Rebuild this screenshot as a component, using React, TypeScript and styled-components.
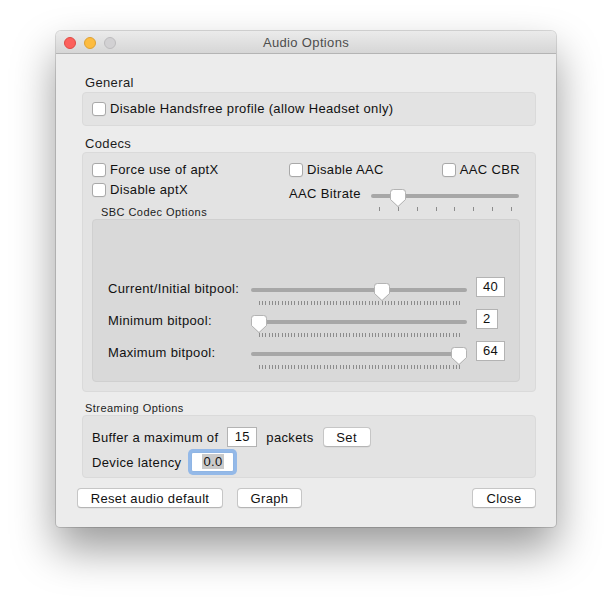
import React from 'react';
import styled, { createGlobalStyle } from 'styled-components';

const GlobalStyle = createGlobalStyle`
  html, body {
    margin: 0;
    background: #ffffff;
  }
  body {
    font-family: "Liberation Sans", Arial, sans-serif;
    font-size: 13px;
    letter-spacing: 0.35px;
    color: #111;
  }
`;

// Page and window frame
const Page = styled.div`
  height: 608px;
  box-sizing: border-box;
  padding: 31px 0 0 56px;
`;

const Window = styled.div`
  width: 500px;
  height: 496px;
  display: flex;
  flex-direction: column;
  background: #ececec;
  border-radius: 5px 5px 4px 4px;
  overflow: hidden;
  box-shadow: 0 0 0 1px rgba(0, 0, 0, 0.14), 0 22px 44px rgba(0, 0, 0, 0.4);
`;

const TitleBar = styled.div`
  height: 23px;
  box-sizing: border-box;
  padding: 1px 8px 0;
  display: grid;
  grid-template-columns: 1fr auto 1fr;
  align-items: center;
  background: linear-gradient(#ebebeb, #d6d6d6);
  border-bottom: 1px solid #b4b4b4;
`;

const Lights = styled.div`
  display: flex;
  gap: 8px;
`;

const Light = styled.span<{ $fill: string; $edge: string }>`
  width: 12px;
  height: 12px;
  border-radius: 50%;
  box-sizing: border-box;
  background: ${(p) => p.$fill};
  border: 1px solid ${(p) => p.$edge};
`;

const Title = styled.div`
  font-size: 13px;
  color: #4d4d4d;
  line-height: 16px;
`;

const Content = styled.div`
  flex: 1;
  display: flex;
  flex-direction: column;
  padding: 21px 20px 19px 26px;
`;

// Group boxes
const SectionLabel = styled.div<{ $small?: boolean; $indent?: number; $gap?: number }>`
  font-size: ${(p) => (p.$small ? 11 : 13)}px;
  letter-spacing: ${(p) => (p.$small ? 0.45 : 0.35)}px;
  line-height: ${(p) => (p.$small ? 14 : 16)}px;
  margin-left: ${(p) => p.$indent ?? 3}px;
  margin-top: ${(p) => p.$gap ?? 0}px;
  color: #1c1c1c;
`;

const GroupBox = styled.div<{ $height: number; $mt?: number }>`
  height: ${(p) => p.$height}px;
  margin-top: ${(p) => p.$mt ?? 0}px;
  box-sizing: border-box;
  background: #e3e3e3;
  border: 1px solid #dadada;
  border-radius: 4px;
`;

const GeneralBox = styled(GroupBox)`
  display: flex;
  align-items: center;
  padding-left: 9px;
`;

const CodecsBox = styled(GroupBox)`
  padding: 7px 15px 0 9px;
`;

const CodecTop = styled.div`
  height: 45px;
  display: grid;
  grid-template-columns: 197px 1fr;
`;

const Column = styled.div`
  display: flex;
  flex-direction: column;
`;

const SpreadRow = styled.div`
  height: 20px;
  display: flex;
  align-items: center;
  justify-content: space-between;
`;

const BitrateRow = styled.div`
  margin-top: 6px;
  display: flex;
  align-items: flex-start;
`;

const BitrateLabel = styled.div`
  width: 82px;
  line-height: 16px;
`;

const SbcBox = styled.div`
  height: 163px;
  box-sizing: border-box;
  padding: 57px 0 0 15px;
  background: #d9d9d9;
  border: 1px solid #d0d0d0;
  border-radius: 4px;
`;

const PoolRow = styled.div`
  height: 32px;
  display: flex;
  align-items: flex-start;
`;

const PoolLabel = styled.div`
  width: 143px;
  margin-top: 4px;
  line-height: 16px;
  white-space: nowrap;
`;

const ValueBox = styled.div`
  margin-left: 9px;
  height: 20px;
  box-sizing: border-box;
  padding: 0 6px;
  line-height: 18px;
  background: #fff;
  border: 1px solid #b3b3b3;
`;

// Checkbox
const CheckRow = styled.label`
  height: 20px;
  display: flex;
  align-items: center;
  gap: 4px;
  line-height: 16px;
  white-space: nowrap;
`;

const CheckSquare = styled.span`
  width: 14px;
  height: 14px;
  box-sizing: border-box;
  background: #fff;
  border: 1px solid #a9a9a9;
  border-radius: 3px;
  box-shadow: 0 0.5px 0 rgba(0, 0, 0, 0.06);
`;

const Check = ({ label }: { label: string }) => (
  <CheckRow>
    <CheckSquare />
    {label}
  </CheckRow>
);

// Slider
const SliderWrap = styled.div<{ $width: number; $mt?: number }>`
  position: relative;
  width: ${(p) => p.$width}px;
  height: 22px;
  margin-top: ${(p) => p.$mt ?? 0}px;
  flex-shrink: 0;
`;

const Track = styled.div`
  margin-top: 5px;
  height: 4px;
  border-radius: 2px;
  background: #a7a7a7;
`;

const Ticks = styled.svg`
  display: block;
  margin-top: 9px;
`;

const Thumb = styled.svg`
  position: absolute;
  top: 0;
  filter: drop-shadow(0 0.5px 0.5px rgba(0, 0, 0, 0.18));
`;

const Slider = ({
  width,
  min,
  max,
  value,
  ticks,
  mt,
}: {
  width: number;
  min: number;
  max: number;
  value: number;
  ticks: number;
  mt?: number;
}) => {
  const span = width - 16;
  const left = ((value - min) / (max - min)) * span;
  const marks = Array.from({ length: ticks }, (_, i) => 8 + (i * span) / (ticks - 1));
  return (
    <SliderWrap $width={width} $mt={mt}>
      <Track />
      <Ticks width={width} height={4} shapeRendering="crispEdges">
        {marks.map((x, i) => (
          <rect key={i} x={Math.round(x)} y={0} width={1} height={4} fill="#8c8c8c" />
        ))}
      </Ticks>
      <Thumb width={16} height={18} viewBox="0 0 16 18" style={{ left }}>
        <path
          d="M3.5 0.5 H12.5 A3 3 0 0 1 15.5 3.5 V10.5 L8 17.5 L0.5 10.5 V3.5 A3 3 0 0 1 3.5 0.5 Z"
          fill="#ffffff"
          stroke="#b4b4b4"
        />
      </Thumb>
    </SliderWrap>
  );
};

// Streaming
const StreamBox = styled(GroupBox)`
  padding: 11px 0 0 9px;
  display: flex;
  flex-direction: column;
  gap: 5px;
`;

const StreamRow = styled.div`
  height: 20px;
  display: flex;
  align-items: center;
  gap: 9px;
  white-space: nowrap;
`;

const Field = styled.div<{ $width: number; $focused?: boolean }>`
  width: ${(p) => p.$width}px;
  height: 20px;
  box-sizing: border-box;
  line-height: 18px;
  text-align: center;
  background: #fff;
  border: 1px solid ${(p) => (p.$focused ? '#8fb5e4' : '#b3b3b3')};
  border-radius: ${(p) => (p.$focused ? 2 : 0)}px;
  margin-left: ${(p) => (p.$focused ? 1 : 0)}px;
  box-shadow: ${(p) => (p.$focused ? '0 0 0 3px rgba(128, 174, 232, 0.8)' : 'none')};
`;

const Selected = styled.span`
  background: #cacaca;
  padding: 0 1px;
`;

const Button = styled.button<{ $width: number }>`
  width: ${(p) => p.$width}px;
  height: 20px;
  padding: 0;
  font-family: "Liberation Sans", Arial, sans-serif;
  font-size: 13px;
  letter-spacing: 0.35px;
  color: #111;
  background: #fff;
  border: 1px solid #c6c6c6;
  border-bottom-color: #b5b5b5;
  border-radius: 4px;
  box-shadow: 0 0.5px 0.5px rgba(0, 0, 0, 0.08);
`;

const ButtonRow = styled.div`
  margin: 10px 0 0 -5px;
  display: flex;
  gap: 14px;
`;

const Spacer = styled.div`
  flex: 1;
`;

const App: React.FC = () => (
  <Page>
    <GlobalStyle />
    <Window>
      <TitleBar>
        <Lights>
          <Light $fill="#fc605c" $edge="#df4a44" />
          <Light $fill="#fdbc40" $edge="#dea133" />
          <Light $fill="#d2d1d3" $edge="#bdbcbe" />
        </Lights>
        <Title>Audio Options</Title>
        <span />
      </TitleBar>

      <Content>
        <SectionLabel>General</SectionLabel>
        <GeneralBox $height={34} $mt={1}>
          <Check label="Disable Handsfree profile (allow Headset only)" />
        </GeneralBox>

        <SectionLabel $gap={10}>Codecs</SectionLabel>
        <CodecsBox $height={240}>
          <CodecTop>
            <Column>
              <Check label="Force use of aptX" />
              <Check label="Disable aptX" />
            </Column>
            <Column>
              <SpreadRow>
                <Check label="Disable AAC" />
                <Check label="AAC CBR" />
              </SpreadRow>
              <BitrateRow>
                <BitrateLabel>AAC Bitrate</BitrateLabel>
                <Slider width={148} min={0} max={7} value={1} ticks={8} mt={3} />
              </BitrateRow>
            </Column>
          </CodecTop>
          <SectionLabel $small $indent={9}>SBC Codec Options</SectionLabel>
          <SbcBox>
            <PoolRow>
              <PoolLabel>Current/Initial bitpool:</PoolLabel>
              <Slider width={216} min={2} max={64} value={40} ticks={63} mt={6} />
              <ValueBox>40</ValueBox>
            </PoolRow>
            <PoolRow>
              <PoolLabel>Minimum bitpool:</PoolLabel>
              <Slider width={216} min={2} max={64} value={2} ticks={63} mt={6} />
              <ValueBox>2</ValueBox>
            </PoolRow>
            <PoolRow>
              <PoolLabel>Maximum bitpool:</PoolLabel>
              <Slider width={216} min={2} max={64} value={64} ticks={63} mt={6} />
              <ValueBox>64</ValueBox>
            </PoolRow>
          </SbcBox>
        </CodecsBox>

        <SectionLabel $small $gap={9}>Streaming Options</SectionLabel>
        <StreamBox $height={63}>
          <StreamRow>
            Buffer a maximum of
            <Field $width={30}>15</Field>
            packets
            <Button $width={48}>Set</Button>
          </StreamRow>
          <StreamRow>
            Device latency
            <Field $width={43} $focused>
              <Selected>0.0</Selected>
            </Field>
          </StreamRow>
        </StreamBox>

        <ButtonRow>
          <Button $width={146}>Reset audio default</Button>
          <Button $width={65}>Graph</Button>
          <Spacer />
          <Button $width={64}>Close</Button>
        </ButtonRow>
      </Content>
    </Window>
  </Page>
);

export default App;
